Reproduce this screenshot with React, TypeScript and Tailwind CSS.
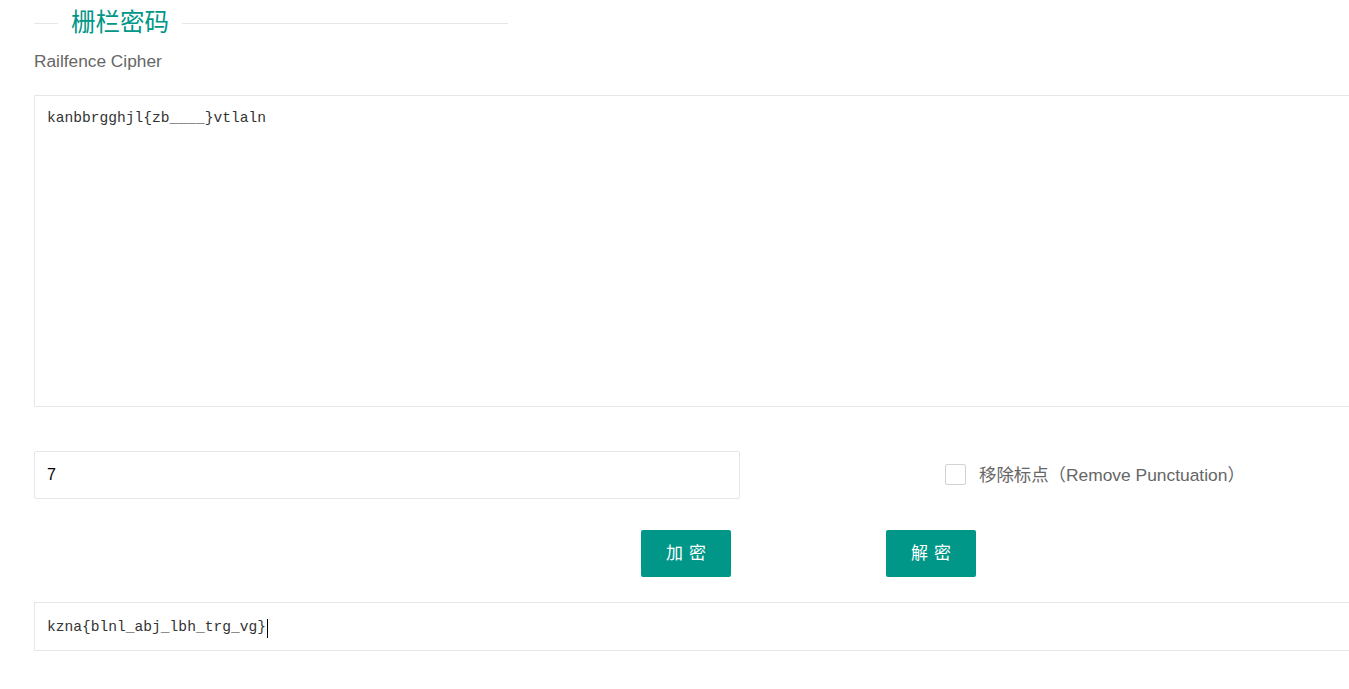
import React from 'react';

const sans = '"Liberation Sans", "Noto Sans CJK SC", sans-serif';
const mono = '"Liberation Mono", "Noto Sans CJK SC", monospace';

const App: React.FC = () => {
  return (
    <div className="w-full min-h-[689px] overflow-hidden bg-white" style={{ fontFamily: sans }}>
      <div className="w-[1412px] pl-[34px] pt-[9px]">
        {/* Title - layui field title style */}
        <div className="flex items-center w-[474px]">
          <span className="w-[24px] h-px bg-[#e6e6e6]" />
          <span className="px-[13px] text-[24.5px] leading-[28px] text-[#009688]">栅栏密码</span>
          <span className="flex-1 h-px bg-[#e6e6e6]" />
        </div>

        <p className="mt-[13px] text-[17.3px] leading-[22px] text-[#666]">Railfence Cipher</p>

        {/* Source text */}
        <textarea
          className="mt-[23px] block w-[1412px] h-[312px] resize-none border border-[#e6e6e6] bg-white px-[12px] pt-[12px] pb-[10px] text-[14.6px] leading-[20px] text-[#333] outline-none"
          style={{ fontFamily: mono }}
          defaultValue="kanbbrgghjl{zb____}vtlaln"
        />

        {/* Key + option */}
        <div className="mt-[44px] flex items-center">
          <input
            className="w-[706px] h-[48px] border border-[#e6e6e6] rounded-[2px] px-[12px] text-[16px] text-black outline-none"
            defaultValue="7"
          />
          <label className="ml-[205px] flex items-center">
            <span className="w-[21px] h-[21px] border border-[#d2d2d2] rounded-[2px] bg-white" />
            <span className="ml-[13px] text-[17.4px] text-[#666]">移除标点（Remove Punctuation）</span>
          </label>
        </div>

        {/* Actions */}
        <div className="mt-[31px] flex pl-[607px] gap-[155px]">
          <button className="w-[90px] h-[47px] rounded-[2px] bg-[#009688] text-white text-[17px] tracking-[6px] pl-[6px]">
            加密
          </button>
          <button className="w-[90px] h-[47px] rounded-[2px] bg-[#009688] text-white text-[17px] tracking-[6px] pl-[6px]">
            解密
          </button>
        </div>

        {/* Result */}
        <div
          className="mt-[25px] flex items-center w-[1412px] h-[49px] border border-[#e6e6e6] px-[12px] pt-[3px] text-[14.6px] text-[#333]"
          style={{ fontFamily: mono }}
        >
          <span>kzna{'{'}blnl_abj_lbh_trg_vg{'}'}</span>
          <span className="ml-[1px] w-px h-[19px] bg-black" />
        </div>
      </div>
    </div>
  );
};

export default App;
